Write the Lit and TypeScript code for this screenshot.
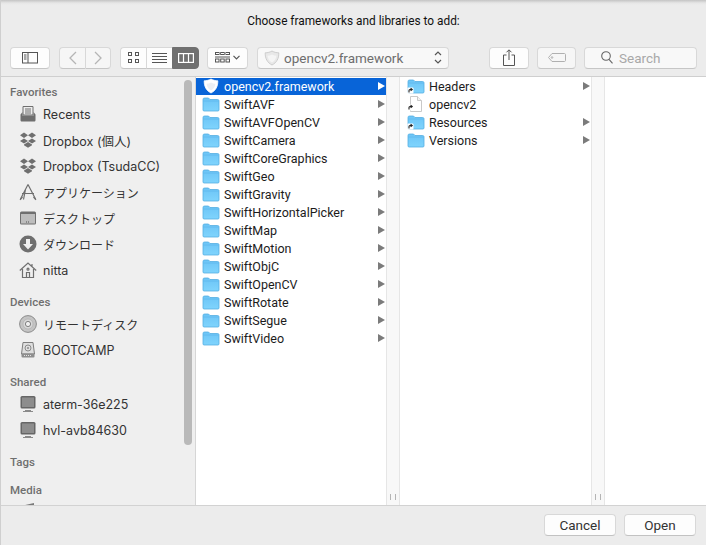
import { LitElement, html, css, svg } from "lit";
import { customElement } from "lit/decorators.js";

const folder = (alias = false) => html`<svg class="fi" width="18" height="16" viewBox="0 0 18 16">
  <defs><linearGradient id="fg" x1="0" y1="0" x2="0" y2="1"><stop offset="0" stop-color="#6cc4f6"/><stop offset="1" stop-color="#7fd4fd"/></linearGradient></defs>
  <path d="M1 3.5C1 2.5 1.5 2 2.5 2H6.5L8 3.5H15.5C16.5 3.5 17 4 17 5V14C17 14.6 16.6 15 16 15H2C1.4 15 1 14.6 1 14Z" fill="url(#fg)" stroke="#55aee2" stroke-width=".8"/>
  <path d="M1.3 5H16.7" stroke="#5fb8ec" stroke-width=".8"/>
  ${alias ? badge : ""}
</svg>`;
const badge = svg`<rect x="0.5" y="9.5" width="6" height="6" rx="1" fill="#fff"/><path d="M2 14.5V12.5C2 11.8 2.4 11.5 3 11.5H5M3.6 10.2L5.2 11.5L3.6 12.8" fill="none" stroke="#222" stroke-width="1.1"/>`;
const fileIcon = html`<svg class="fi" width="18" height="18" viewBox="0 0 18 18">
  <path d="M3.5 1.5H10.5L14.5 5.5V16.5H3.5Z" fill="#fff" stroke="#c9c9c9"/><path d="M10.5 1.5V5.5H14.5" fill="#f3f3f3" stroke="#c9c9c9"/>${badge}
</svg>`;
const shield = (fill: string, stroke: string, inner: string) => html`<svg class="fi" width="18" height="18" viewBox="0 0 18 18">
  <path d="M9 2C11 3.2 13.6 3.8 15.8 3.8C16 9.5 13.5 13.8 9 16C4.5 13.8 2 9.5 2.2 3.8C4.4 3.8 7 3.2 9 2Z" fill="${fill}" stroke="${stroke}" stroke-width=".8"/>
  <path d="M9 5.5C10.5 6.3 12 6.7 13.4 6.8C13.2 9.8 11.6 12 9 13.4C6.4 12 4.8 9.8 4.6 6.8C6 6.7 7.5 6.3 9 5.5Z" fill="${inner}"/>
</svg>`;

const G = "#6f6f6f";
const dropbox = html`<svg width="18" height="18" viewBox="0 0 18 18" fill="${G}"><path d="M5 1.5L9 4.2L5 7L1 4.2ZM13 1.5L17 4.2L13 7L9 4.2ZM5 7.4L9 10L5 12.6L1 10ZM13 7.4L17 10L13 12.6L9 10Z"/><path d="M5 13.5L9 11L13 13.5V14.2L9 16.8L5 14.2Z"/></svg>`;
const sideIcons: Record<string, unknown> = {
  recents: html`<svg width="18" height="18" viewBox="0 0 18 18"><path d="M4 1.5H14V10H4Z" fill="#ededed" stroke="${G}"/><path d="M6 4H12M6 6H12M6 8H12" stroke="${G}"/><path d="M1.5 9.5L3.5 7V10.5H14.5V7L16.5 9.5V15C16.5 16 16 16.5 15 16.5H3C2 16.5 1.5 16 1.5 15Z" fill="${G}"/></svg>`,
  dropbox,
  apps: html`<svg width="18" height="18" viewBox="0 0 18 18" fill="none" stroke="${G}" stroke-width="1.2"><path d="M9 1.5L16.5 16M9 1.5L1.5 16M3 10.5H15M6.5 6.5L4.5 16.5"/><path d="M1 16.8L3.5 14M17 16.8L14.5 14"/></svg>`,
  desktop: html`<svg width="18" height="18" viewBox="0 0 18 18"><rect x="1" y="2.5" width="16" height="13" rx="1.5" fill="${G}"/><rect x="2" y="5" width="14" height="9.5" fill="#bdbdbd"/><path d="M7 13H11" stroke="#555" stroke-dasharray="1 1" stroke-width="1.2"/></svg>`,
  download: html`<svg width="18" height="18" viewBox="0 0 18 18"><circle cx="9" cy="9" r="8.5" fill="${G}"/><path d="M7 4H11V9H14L9 14.5L4 9H7Z" fill="#f0f0f0"/></svg>`,
  home: html`<svg width="18" height="18" viewBox="0 0 18 18" fill="none" stroke="${G}" stroke-width="1.2"><path d="M.8 9.5L9 2L17.2 9.5M13 3V5.8M3.5 8V16.5H14.5V8"/><path d="M7.5 16.5V11.5H10.5V16.5" /><circle cx="9" cy="8.2" r="1"/></svg>`,
  disc: html`<svg width="18" height="18" viewBox="0 0 18 18"><circle cx="9" cy="9" r="8.4" fill="#c4c4c4" stroke="#8c8c8c"/><circle cx="9" cy="9" r="5" fill="#d8d8d8" stroke="#aaa" stroke-width=".6"/><circle cx="9" cy="9" r="2.6" fill="#f0f0f0" stroke="#808080"/></svg>`,
  drive: html`<svg width="18" height="18" viewBox="0 0 18 18"><path d="M4 1.5H14L15.5 13H2.5Z" fill="#dedede" stroke="#7d7d7d"/><circle cx="9" cy="7" r="3" fill="none" stroke="#8a8a8a"/><circle cx="9" cy="7" r="1" fill="#8a8a8a"/><rect x="2.5" y="12.5" width="13" height="4" rx="1" fill="#8e8e8e"/><path d="M5 14.5H13" stroke="#e4e4e4" stroke-dasharray="1 1"/></svg>`,
  monitor: html`<svg width="18" height="18" viewBox="0 0 18 18"><rect x="1.5" y="1" width="15" height="12.5" rx="1.5" fill="#666"/><rect x="3" y="2.5" width="12" height="9.5" fill="#8d8d8d"/><path d="M6 15H12V16H14V17H4V16H6Z" fill="#8a8a8a"/></svg>`,
  media: html`<svg width="18" height="18" viewBox="0 0 18 18"><path d="M4 3.5L15 1V6H4Z" fill="#7a7a7a"/></svg>`,
};

type Row = { icon: string; label: string; jp?: boolean };
const sections: { title: string; rows: Row[] }[] = [
  { title: "Favorites", rows: [
    { icon: "recents", label: "Recents" },
    { icon: "dropbox", label: "Dropbox (個人)" },
    { icon: "dropbox", label: "Dropbox (TsudaCC)" },
    { icon: "apps", label: "アプリケーション", jp: true },
    { icon: "desktop", label: "デスクトップ", jp: true },
    { icon: "download", label: "ダウンロード", jp: true },
    { icon: "home", label: "nitta" },
  ]},
  { title: "Devices", rows: [
    { icon: "disc", label: "リモートディスク", jp: true },
    { icon: "drive", label: "BOOTCAMP" },
  ]},
  { title: "Shared", rows: [
    { icon: "monitor", label: "aterm-36e225" },
    { icon: "monitor", label: "hvl-avb84630" },
  ]},
  { title: "Tags", rows: [] },
];

const col1 = ["SwiftAVF","SwiftAVFOpenCV","SwiftCamera","SwiftCoreGraphics","SwiftGeo","SwiftGravity","SwiftHorizontalPicker","SwiftMap","SwiftMotion","SwiftObjC","SwiftOpenCV","SwiftRotate","SwiftSegue","SwiftVideo"];

@customElement("app-root")
export class AppRoot extends LitElement {
  static styles = css`
    :host { display: block; width: 706px; height: 545px; overflow: hidden; }
    * { box-sizing: border-box; }
    .win { width: 706px; height: 545px; display: flex; flex-direction: column; background: #ececec;
      font-family: "Roboto", "Noto Sans CJK JP", sans-serif; font-size: 12.5px; color: #1c1c1c; border-left: 1px solid #cfcfcf; }
    .head { height: 77px; flex: none; display: flex; flex-direction: column; border-bottom: 1px solid #cfcfcf;
      background: linear-gradient(#c4c4c4 0, #e6e6e6 3px, #ececec 5px); }
    .title { height: 46px; padding-top: 14px; text-align: center; line-height: 15px; font-size: 11.85px; color: #111; }
    .tb { display: flex; align-items: center; height: 23px; padding-left: 9px; }
    .btn { height: 22px; background: #fdfdfd; border: 1px solid #d8d8d8; border-bottom-color: #c6c6c6; border-radius: 4px;
      display: flex; align-items: center; justify-content: center; flex: none; }
    .seg { display: flex; flex: none; }
    .seg .btn { border-radius: 0; border-right: none; }
    .seg .btn:first-child { border-radius: 4px 0 0 4px; }
    .seg .btn:last-child { border-radius: 0 4px 4px 0; border-right: 1px solid #d8d8d8; }
    .seg .btn.on { background: #707070; border-color: #707070; }
    .dis { background: #f6f6f6; }
    .path { width: 192px; margin-left: 9px; justify-content: flex-start; padding-left: 5px; color: #6e6e6e; font-size: 13.5px; gap: 3px; background: #f8f8f8; }
    .path span { flex: 1; }
    .search { width: 113px; margin-left: 8px; justify-content: flex-start; padding-left: 16px; gap: 6px; color: #a8a8a8; font-size: 13.5px; background: #f8f8f8; }

    .main { height: 428px; flex: none; display: flex; background: #fff; }
    .side { width: 195px; flex: none; background: #efefef; border-right: 1px solid #d6d6d6; position: relative; overflow: hidden; padding-top: 6px; }
    .thumb { position: absolute; left: 183px; top: 3px; width: 8px; height: 365px; border-radius: 4px; background: #b9b9b9; }
    .sh { height: 18px; line-height: 18px; padding-left: 9px; font-size: 11.5px; font-weight: 500; color: #6f6f6f; }
    .sec { margin-bottom: 10px; }
    .sr { height: 26px; display: flex; align-items: center; padding-left: 18px; gap: 6px; color: #333; font-family: "Inter", "Noto Sans CJK JP", sans-serif; font-size: 12.5px; white-space: nowrap; }
    .sr.jp { font-size: 12px; }
    .sr svg { flex: none; }
    .clip { height: 8px; overflow: hidden; margin-top: 3px; padding-left: 18px; }
    .clip svg { display: block; }

    .col { flex: none; padding-top: 1px; }
    .c1 { width: 190px; }
    .c2 { width: 191px; }
    .c3 { flex: 1; }
    .row { height: 18px; display: flex; align-items: center; padding: 0 0 1px 6px; border-bottom: 1px solid transparent; gap: 4px; font-size: 12.5px; color: #1c1c1c; }
    .c2 .row { padding-left: 7px; }
    .row span { flex: 1; }
    .row.sel { background: #0864d8; color: #fff; border-bottom-color: #fff; }
    .fi { flex: none; }
    .arr { width: 0; height: 0; border-left: 7px solid #7b7b7b; border-top: 4px solid transparent; border-bottom: 4px solid transparent; margin-right: 1px; flex: none; }
    .sel .arr { border-left-color: #fff; }
    .bar { width: 14px; flex: none; background: #f8f8f8; border-left: 1px solid #e6e6e6; border-right: 1px solid #e6e6e6;
      display: flex; justify-content: center; align-items: flex-end; gap: 4px; padding-bottom: 5px; }
    .bar i { width: 1px; height: 6px; background: #b4b4b4; display: block; }

    .foot { flex: 1; border-top: 1px solid #d2d2d2; display: flex; justify-content: flex-end; align-items: flex-start; gap: 8px; padding: 8px 10px 0 0; }
    .fb { width: 72px; height: 22px; font-size: 13.5px; color: #333; background: #fdfdfd; border-radius: 4px; border: 1px solid #d8d8d8; border-bottom-color: #c2c2c2;
      display: flex; align-items: center; justify-content: center; }
  `;

  render() {
    const s = "#555";
    return html`<div class="win">
      <div class="head">
        <div class="title">Choose frameworks and libraries to add:</div>
        <div class="tb">
          <div class="btn" style="width:40px"><svg width="16" height="12" viewBox="0 0 16 12" fill="none" stroke="${s}"><rect x=".5" y=".5" width="15" height="10.5"/><path d="M6 .5V11M2 3H4.5M2 5H4.5M2 7H4.5"/></svg></div>
          <div class="seg" style="margin-left:9px">
            <div class="btn dis" style="width:26px"><svg width="9" height="14" viewBox="0 0 9 14" fill="none" stroke="#b5b5b5" stroke-width="1.3"><path d="M8 1L2 7L8 13"/></svg></div>
            <div class="btn dis" style="width:26px"><svg width="9" height="14" viewBox="0 0 9 14" fill="none" stroke="#b5b5b5" stroke-width="1.3"><path d="M1 1L7 7L1 13"/></svg></div>
          </div>
          <div class="seg" style="margin-left:9px">
            <div class="btn" style="width:26px"><svg width="11" height="11" viewBox="0 0 11 11" fill="none" stroke="${s}"><rect x=".5" y=".5" width="3" height="3"/><rect x="7.5" y=".5" width="3" height="3"/><rect x=".5" y="7.5" width="3" height="3"/><rect x="7.5" y="7.5" width="3" height="3"/></svg></div>
            <div class="btn" style="width:26px"><svg width="15" height="10" viewBox="0 0 15 10" stroke="${s}"><path d="M0 .5H15M0 3.5H15M0 6.5H15M0 9.5H15"/></svg></div>
            <div class="btn on" style="width:27px"><svg width="16" height="10" viewBox="0 0 16 10" fill="none" stroke="#fff" stroke-width="1.2"><rect x=".6" y=".6" width="14.8" height="8.8"/><path d="M5.5 0V10M10.5 0V10"/></svg></div>
          </div>
          <div class="btn" style="width:41px;margin-left:8px;gap:3px"><svg width="15" height="11" viewBox="0 0 15 11" fill="none" stroke="${s}"><rect x=".5" y=".5" width="3.5" height="2"/><rect x="5.7" y=".5" width="3.5" height="2"/><rect x="11" y=".5" width="3.5" height="2"/><path d="M0 5H15" /><rect x=".5" y="7" width="3.5" height="3"/><rect x="5.7" y="7" width="3.5" height="3"/><rect x="11" y="7" width="3.5" height="3"/></svg><svg width="7" height="5" viewBox="0 0 7 5" fill="none" stroke="${s}" stroke-width="1.2"><path d="M.5 .8L3.5 3.8L6.5 .8"/></svg></div>
          <div class="btn path">${shield("#e8e8e8", "#c4c4c4", "#f5f5f5")}<span>opencv2.framework</span><svg style="margin-right:6px" width="8" height="15" viewBox="0 0 8 15" fill="none" stroke="#555" stroke-width="1.2"><path d="M1 5L4 2L7 5M1 10L4 13L7 10"/></svg></div>
          <div class="btn" style="width:40px;margin-left:40px"><svg width="12" height="17" viewBox="0 0 12 17" fill="none" stroke="#555"><path d="M3.5 6H.5V16.5H11.5V6H8.5M6 11V1M3.5 3.3L6 .8L8.5 3.3"/></svg></div>
          <div class="btn dis" style="width:39px;margin-left:8px"><svg width="18" height="9" viewBox="0 0 18 9" fill="none" stroke="#b0b0b0"><path d="M4 .5H16.5C17 .5 17.5 1 17.5 1.5V7.5C17.5 8 17 8.5 16.5 8.5H4L.5 4.5Z"/><circle cx="4" cy="4.5" r=".8"/></svg></div>
          <div class="btn search"><svg width="12" height="13" viewBox="0 0 12 13" fill="none" stroke="#666" stroke-width="1.1"><circle cx="5" cy="5" r="4.3"/><path d="M8 8.4L11.5 12.4"/></svg>Search</div>
        </div>
      </div>
      <div class="main">
        <div class="side">
          <div class="thumb"></div>
          ${sections.map((sec) => html`<div class="sec"><div class="sh">${sec.title}</div>
            ${sec.rows.map((r) => html`<div class="sr ${r.jp ? "jp" : ""}">${sideIcons[r.icon]}<span>${r.label}</span></div>`)}</div>`)}
          <div class="sh">Media</div>
          <div class="clip">${sideIcons.media}</div>
        </div>
        <div class="col c1">
          <div class="row sel">${shield("#fff", "#fff", "#eceff4")}<span>opencv2.framework</span><i class="arr"></i></div>
          ${col1.map((n) => html`<div class="row">${folder()}<span>${n}</span><i class="arr"></i></div>`)}
        </div>
        <div class="bar"><i></i><i></i></div>
        <div class="col c2">
          <div class="row">${folder(true)}<span>Headers</span><i class="arr"></i></div>
          <div class="row">${fileIcon}<span>opencv2</span></div>
          <div class="row">${folder(true)}<span>Resources</span><i class="arr"></i></div>
          <div class="row">${folder()}<span>Versions</span><i class="arr"></i></div>
        </div>
        <div class="bar"><i></i><i></i></div>
        <div class="col c3"></div>
      </div>
      <div class="foot"><div class="fb">Cancel</div><div class="fb">Open</div></div>
    </div>`;
  }
}
